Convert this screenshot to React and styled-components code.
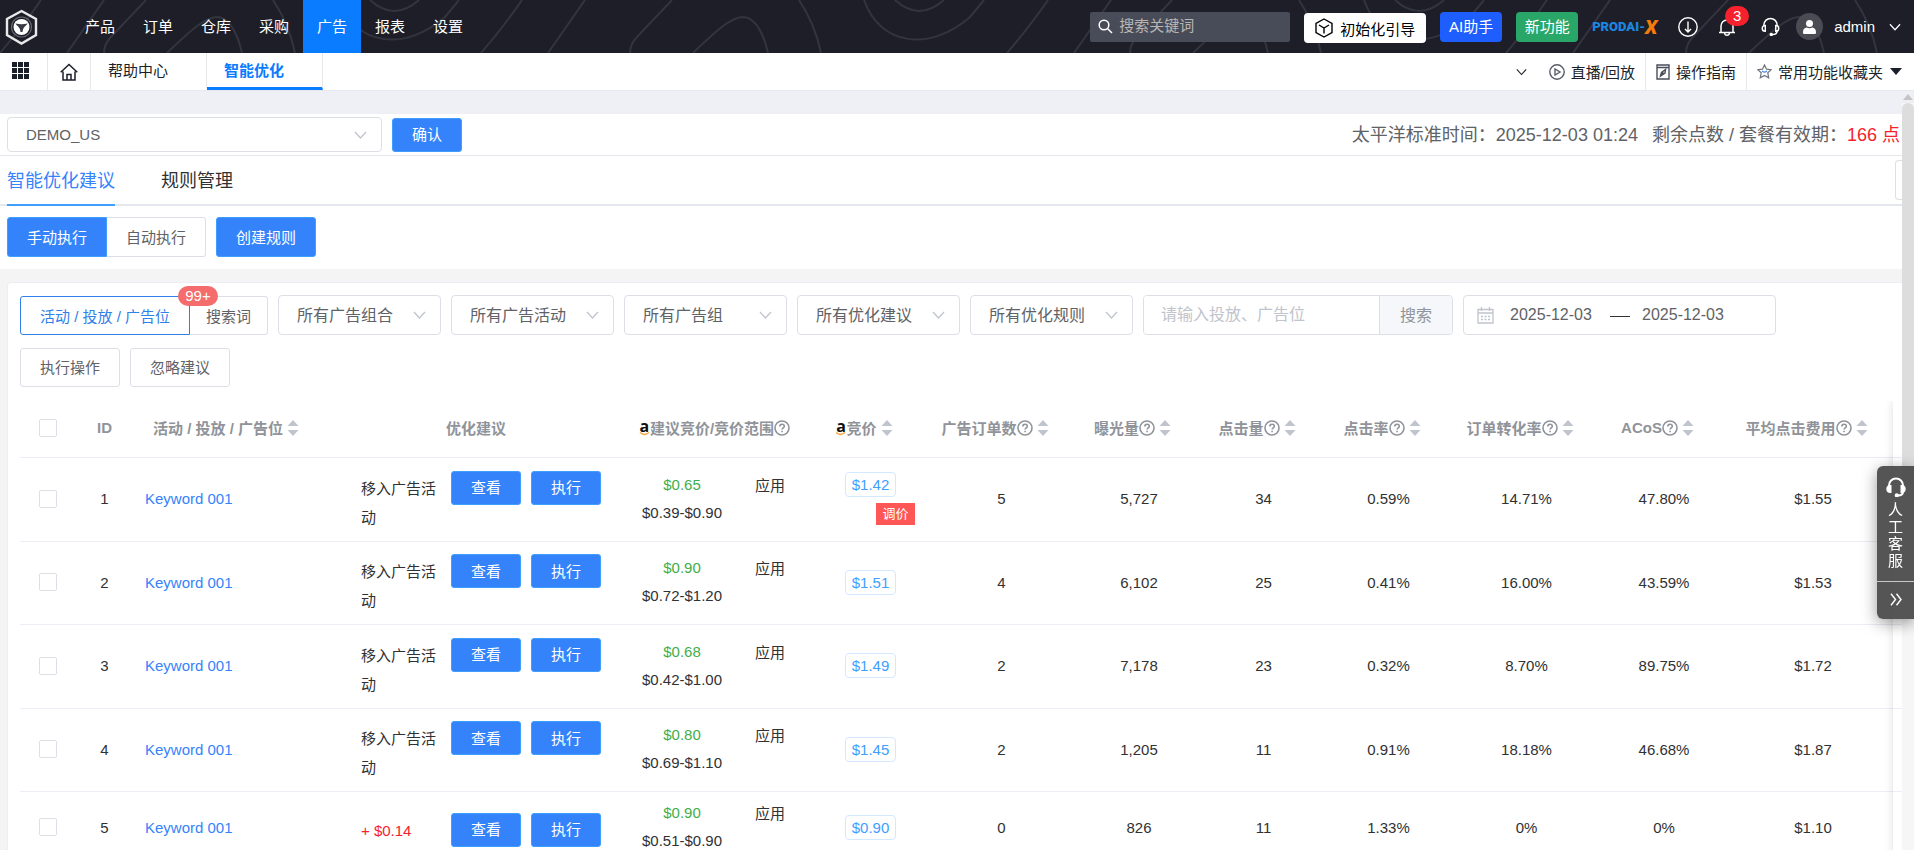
import React, { useState } from 'react';
import styled, { createGlobalStyle, ThemeProvider } from 'styled-components';

const theme = {
  dark: '#1e1e28',
  blue: '#0a7cff',
  primary: '#3583fb',
  text: '#303133',
  grey: '#606266',
  muted: '#909399',
  placeholder: '#c0c4cc',
  border: '#dcdfe6',
  line: '#ebeef5',
  red: '#f5222d',
  font: {
    size: { s: '13px', m: '15px', l: '16px', xl: '18px' },
  },
};

const GlobalStyle = createGlobalStyle`
  *, *::before, *::after {
    box-sizing: border-box;
  }
  body {
    margin: 0;
    overflow: hidden;
    font-family: 'Liberation Sans', 'Noto Sans CJK SC', sans-serif;
    font-size: 15px;
    color: #303133;
    background: #fff;
  }
  button, input, select {
    font-family: inherit;
    font-size: inherit;
    margin: 0;
  }
  button {
    cursor: pointer;
  }
  a {
    text-decoration: none;
  }
  svg {
    display: block;
    flex-shrink: 0;
  }
`;

const Page = styled.div`
  display: flex;
  flex-direction: column;
  height: 100vh;
`;

/* top bar */

const Header = styled.header`
  position: relative;
  display: flex;
  align-items: center;
  flex-shrink: 0;
  height: 53px;
  padding: 0 13px 0 5px;
  color: #fff;
  background-color: ${({ theme }) => theme.dark};
`;

const Waves = styled.svg`
  position: absolute;
  top: 0;
  left: 0;
  width: 100%;
  height: 100%;
  fill: none;
  stroke: #34343e;
  stroke-width: 2;
`;

const LogoLink = styled.a`
  position: relative;
  width: 66px;
`;

const MainNav = styled.nav`
  position: relative;
  display: flex;
  flex: 1;
`;

const NavLink = styled.a`
  padding: 0 14px;
  line-height: 53px;
  color: #fff;
  background-color: ${({ $active, theme }) => ($active ? theme.blue : 'transparent')};
`;

const HeaderTools = styled.div`
  position: relative;
  display: flex;
  align-items: center;
`;

const SearchBox = styled.label`
  display: flex;
  align-items: center;
  gap: 6px;
  width: 200px;
  height: 30px;
  margin-right: 14px;
  padding: 0 8px;
  border-radius: 2px;
  background-color: #484c59;
`;

const SearchInput = styled.input`
  flex: 1;
  min-width: 0;
  padding: 0 0 2px;
  border: 0;
  outline: 0;
  color: #fff;
  background: transparent;
  &::placeholder {
    color: #b8b6b4;
  }
`;

const HeaderButton = styled.button`
  display: flex;
  align-items: center;
  justify-content: center;
  gap: 7px;
  min-width: 62px;
  height: 30px;
  margin-right: 14px;
  padding: 0 7px 2px;
  border: 0;
  border-radius: 4px;
  white-space: nowrap;
  color: ${({ $color }) => $color || '#fff'};
  background-color: ${({ $bg }) => $bg};
`;

const GuideButton = styled(HeaderButton)`
  padding: 0 11px;
  margin-top: 3px;
`;

const Brand = styled.a`
  display: flex;
  align-items: center;
  width: 67px;
  margin-right: 19px;
  font: 900 13px Roboto, sans-serif;
  color: #1b86e0;
`;

const BrandMark = styled.span`
  font-size: 20px;
  font-style: italic;
  color: #f57c0a;
`;

const IconButton = styled.button`
  position: relative;
  display: flex;
  align-items: center;
  gap: 14px;
  margin-right: ${({ $gap }) => $gap || 0}px;
  padding: 0;
  border: 0;
  color: inherit;
  background: none;
`;

const CountBadge = styled.span`
  position: absolute;
  top: -12px;
  left: 7px;
  width: 24px;
  border-radius: 10px;
  line-height: 20px;
  text-align: center;
  color: #fff;
  background-color: ${({ theme }) => theme.red};
`;

const Avatar = styled.span`
  display: flex;
  align-items: center;
  justify-content: center;
  width: 27px;
  height: 27px;
  margin-right: 11px;
  border-radius: 50%;
  background-color: #4b4b54;
`;

/* page tabs */

const TabBar = styled.div`
  display: flex;
  flex-shrink: 0;
  height: 38px;
  border-bottom: 1px solid #e6e8ec;
  color: #1b1f2a;
`;

const TabIcon = styled.a`
  display: flex;
  align-items: center;
  justify-content: center;
  width: 43px;
  border-right: 1px solid #e6e8ec;
  color: inherit;
`;

const MenuIcon = styled(TabIcon)`
  justify-content: flex-start;
  width: 48px;
  padding: 0 0 3px 12px;
`;

const PageTab = styled.a`
  width: 116px;
  padding-left: 17px;
  border-right: 1px solid #e6e8ec;
  border-bottom: 3px solid ${({ $active, theme }) => ($active ? theme.blue : 'transparent')};
  line-height: 36px;
  font-weight: ${({ $active }) => ($active ? 700 : 400)};
  color: ${({ $active, theme }) => ($active ? theme.blue : 'inherit')};
`;

const TabTools = styled.div`
  display: flex;
  margin-left: auto;
  padding-right: 2px;
`;

const ToolLink = styled.a`
  display: flex;
  align-items: center;
  gap: 6px;
  padding: 0 10px;
  border-right: ${({ $last }) => ($last ? 0 : 1)}px solid #e6e8ec;
  white-space: nowrap;
  color: inherit;
`;

/* body */

const Body = styled.div`
  display: flex;
  flex: 1;
  min-height: 0;
  background-color: #f4f4f4;
`;

const Content = styled.main`
  flex: 1;
  min-width: 0;
  overflow: hidden;
`;

const TopBand = styled.div`
  height: 23px;
  background-color: #eff0f5;
`;

const ShopBar = styled.div`
  display: flex;
  align-items: center;
  gap: 10px;
  height: 42px;
  padding: 0 2px 0 7px;
  border-bottom: 1px solid #e4e7ec;
  background-color: #fff;
`;

const SelectBox = styled.div`
  position: relative;
  width: ${({ $width }) => $width}px;
  height: ${({ $height }) => $height}px;
  svg {
    position: absolute;
    top: 50%;
    right: 15px;
    margin-top: -4px;
    pointer-events: none;
  }
`;

const Select = styled.select`
  appearance: none;
  width: 100%;
  height: 100%;
  padding: 0 18px;
  border: 1px solid ${({ theme }) => theme.border};
  border-radius: 4px;
  font-size: ${({ $size, theme }) => theme.font.size[$size || 'l']};
  color: ${({ theme }) => theme.grey};
  background-color: #fff;
`;

const Button = styled.button`
  height: ${({ $height }) => $height || 34}px;
  padding: 0 19px 2px;
  border: 1px solid ${({ $plain, theme }) => ($plain ? theme.border : '#409eff')};
  border-radius: 3px;
  white-space: nowrap;
  color: ${({ $plain, theme }) => ($plain ? theme.grey : '#fff')};
  background-color: ${({ $plain, theme }) => ($plain ? '#fff' : theme.primary)};
`;

const ShopInfo = styled.p`
  display: flex;
  gap: 14px;
  margin: 0 0 0 auto;
  padding-bottom: 3px;
  font-size: ${({ theme }) => theme.font.size.xl};
  white-space: nowrap;
  color: ${({ theme }) => theme.grey};
`;

const Points = styled.span`
  color: ${({ theme }) => theme.red};
`;

const SectionTabs = styled.div`
  display: flex;
  gap: 46px;
  height: 50px;
  padding-left: 7px;
  border-bottom: 2px solid #e4e7ed;
  background-color: #fff;
`;

const SectionTab = styled.a`
  height: 50px;
  line-height: 50px;
  font-size: ${({ theme }) => theme.font.size.xl};
  border-bottom: 2px solid ${({ $active }) => ($active ? '#409eff' : 'transparent')};
  color: ${({ $active, theme }) => ($active ? theme.primary : theme.text)};
`;

const SideButton = styled.button`
  align-self: center;
  width: 7px;
  height: 40px;
  margin-left: auto;
  padding: 0;
  border: 1px solid ${({ theme }) => theme.border};
  border-right: 0;
  border-radius: 4px 0 0 4px;
  background-color: #fff;
`;

const ModeBar = styled.div`
  display: flex;
  gap: 10px;
  margin-bottom: 13px;
  padding: 11px 7px 12px;
  background-color: #fff;
`;

const ButtonGroup = styled.div`
  display: flex;
  button:first-child {
    border-radius: 3px 0 0 3px;
  }
  button:last-child {
    border-left: 0;
    border-radius: 0 3px 3px 0;
  }
`;

const Card = styled.section`
  margin-left: 7px;
  padding: 12px 0 0 12px;
  border: 1px solid ${({ theme }) => theme.line};
  border-right: 0;
  border-radius: 4px 0 0 0;
  background-color: #fff;
`;

const Filters = styled.div`
  display: flex;
  align-items: flex-end;
  gap: 10px;
  margin-bottom: 13px;
`;

const ScopeButton = styled.button`
  position: relative;
  height: 39px;
  padding: 0 ${({ $active }) => ($active ? 19 : 16)}px;
  border: 1px solid ${({ $active, theme }) => ($active ? '#2f80e8' : theme.border)};
  white-space: nowrap;
  color: ${({ $active, theme }) => ($active ? '#2f80e8' : theme.grey)};
  background-color: #fff;
`;

const ScopeBadge = styled.span`
  position: absolute;
  z-index: 1;
  top: -11px;
  right: -29px;
  width: 40px;
  border-radius: 10px;
  line-height: 20px;
  color: #fff;
  background-color: #f56c6c;
`;

const SearchGroup = styled.div`
  display: flex;
  width: 310px;
  height: 40px;
  border: 1px solid ${({ theme }) => theme.border};
  border-radius: 4px;
  font-size: ${({ theme }) => theme.font.size.l};
  overflow: hidden;
`;

const TextInput = styled.input`
  flex: 1;
  min-width: 0;
  padding: 0 17px;
  border: 0;
  outline: 0;
  &::placeholder {
    color: ${({ theme }) => theme.placeholder};
  }
`;

const AppendButton = styled.button`
  width: 73px;
  padding: 0 0 2px;
  border: 0;
  border-left: 1px solid ${({ theme }) => theme.border};
  color: ${({ theme }) => theme.muted};
  background-color: #f5f7fa;
`;

const DateRange = styled.div`
  display: flex;
  align-items: center;
  width: 313px;
  height: 40px;
  padding-left: 13px;
  border: 1px solid ${({ theme }) => theme.border};
  border-radius: 4px;
  font-size: ${({ theme }) => theme.font.size.l};
`;

const DateInput = styled.input`
  width: 84px;
  padding: 0;
  border: 0;
  outline: 0;
  color: ${({ theme }) => theme.grey};
`;

const DateDash = styled.span`
  width: 20px;
  height: 1px;
  margin: 2px 12px 0 16px;
  background-color: ${({ theme }) => theme.text};
`;

const Actions = styled.div`
  display: flex;
  gap: 10px;
  margin-bottom: 14px;
`;

/* table */

const TableWrap = styled.div`
  position: relative;
  overflow: hidden;
`;

const FixedEdge = styled.div`
  position: absolute;
  top: 0;
  right: 0;
  bottom: 0;
  width: 9px;
  box-shadow: 0 0 10px rgba(0, 0, 0, 0.14);
  pointer-events: none;
`;

const Table = styled.table`
  width: 100%;
  table-layout: fixed;
  border-collapse: separate;
  border-spacing: 0;
  tr:nth-child(even) td {
    height: 83px;
  }
  tr:last-child td {
    height: 73px;
  }
`;

const Th = styled.th`
  height: 57px;
  padding: 0 0 3px;
  border-bottom: 1px solid ${({ theme }) => theme.line};
  white-space: nowrap;
  color: ${({ theme }) => theme.muted};
`;

const ThInner = styled.span`
  display: flex;
  align-items: center;
  justify-content: center;
`;

const Td = styled.td`
  height: 84px;
  padding: 0 0 2px;
  border-bottom: 1px solid ${({ theme }) => theme.line};
  text-align: ${({ $align }) => $align || 'center'};
`;

const SortIcon = styled.svg`
  margin: 0 13px 0 4px;
  fill: ${({ theme }) => theme.placeholder};
`;

const AmazonMark = styled.span`
  display: inline-flex;
  flex-direction: column;
  align-items: center;
  width: 11px;
  font: 700 16px/12px 'Open Sans', sans-serif;
  color: #111;
`;

const Checkbox = styled.input`
  appearance: none;
  display: block;
  width: 18px;
  height: 18px;
  margin: 0 auto;
  border: 1px solid ${({ theme }) => theme.border};
  border-radius: 2px;
  background-color: ${({ checked, theme }) => (checked ? theme.primary : '#fff')};
`;

const KeywordLink = styled.a`
  padding-left: 11px;
  color: ${({ theme }) => theme.primary};
`;

const Suggestion = styled.div`
  display: flex;
  align-items: flex-start;
  gap: 10px;
  padding: 5px 0 0 30px;
  line-height: 29px;
`;

const SuggestionText = styled.span`
  width: 80px;
  padding-top: 3px;
  text-align: left;
  color: ${({ $raise, theme }) => ($raise ? theme.red : theme.text)};
`;

const BidCell = styled.div`
  display: flex;
  align-items: flex-start;
  padding-left: 11px;
  line-height: 28px;
`;

const BidRange = styled.span`
  display: flex;
  flex-direction: column;
  width: 100px;
`;

const BidValue = styled.span`
  color: #3fae49;
`;

const ApplyButton = styled.button`
  flex: 1;
  padding: 0;
  border: 0;
  line-height: 29px;
  color: inherit;
  background: none;
`;

const PriceCell = styled.div`
  display: flex;
  flex-direction: column;
  align-items: center;
  gap: 6px;
`;

const PriceTag = styled.button`
  height: 25px;
  padding: 0 6px;
  border: 1px solid #d4e8ff;
  border-radius: 4px;
  color: #409eff;
  background-color: #fff;
`;

const AdjustTag = styled.span`
  margin-left: 50px;
  padding: 0 6px;
  line-height: 22px;
  font-size: ${({ theme }) => theme.font.size.s};
  color: #fff;
  background-color: #ff5656;
`;

/* page edges */

const Scrollbar = styled.div`
  display: flex;
  flex-direction: column;
  align-items: center;
  width: 12px;
  background-color: #f6f6f6;
`;

const ScrollArrow = styled.span`
  width: 100%;
  height: 12px;
  padding: 3px 1px;
  background-color: #eff0f5;
`;

const ScrollThumb = styled.span`
  width: 12px;
  height: 382px;
  border-radius: 6px;
  background-color: #dddddd;
`;

const ServiceDock = styled.aside`
  position: fixed;
  top: 466px;
  right: 0;
  width: 37px;
  border-radius: 6px 0 0 6px;
  color: #fff;
  background-color: rgba(70, 70, 70, 0.92);
  box-shadow: 0 4px 16px rgba(0, 0, 0, 0.4);
`;

const DockButton = styled.button`
  display: flex;
  flex-direction: column;
  align-items: center;
  justify-content: center;
  width: 100%;
  height: ${({ $height }) => $height}px;
  padding: 0 0 2px;
  border: 0;
  border-top: ${({ $line }) => ($line ? '1px solid #c8c8c8' : 0)};
  line-height: 17px;
  color: inherit;
  background: none;
`;

const DockText = styled.span`
  width: 16px;
  margin-top: 4px;
`;

const DownIcon = ({ width = 13, stroke = '#c0c4cc' }) => (
  <svg width={width} height="8" viewBox="0 0 13 8" fill="none" stroke={stroke} strokeWidth="1.3">
    <path d="M1 1l5.500 6L12 1" />
  </svg>
);

const Sort = () => (
  <SortIcon width="12" height="16" viewBox="0 0 12 16">
    <path d="M6 0l5.500 6h-11zM6 16l5.500-6h-11z" />
  </SortIcon>
);

const Help = () => (
  <svg width="16" height="16" viewBox="0 0 16 16" fill="none" stroke="#909399" strokeWidth="1.600">
    <circle cx="8" cy="8" r="7" />
    <path d="M5.800 6.500c0-3 4.500-3 4.500-.3 0 1.700-2.200 1.600-2.200 3.400M8.100 10.700v1.500" />
  </svg>
);

const Amazon = () => (
  <AmazonMark>
    a
    <svg width="11" height="4" viewBox="0 0 11 4" fill="none" stroke="#f9a13a" strokeWidth="1.300">
      <path d="M1 .6c3 2.600 6 2.600 9 0" />
    </svg>
  </AmazonMark>
);

const Headset = ({ size, filled }) => (
  <svg width={size} height={size} viewBox="0 0 20 20" fill="none" stroke="currentColor" strokeWidth={filled ? 2 : 1.5}>
    <path d="M3 9.500V8.500a7 7 0 0 1 14 0v1M17 14.500c0 2.500-2 4-5 4" />
    <path d="M4.500 9C2.500 9 1.300 10 1.300 12s1.200 3 3.200 3zM15.500 9c2 0 3.200 1 3.200 3s-1.200 3-3.200 3z" fill={filled ? 'currentColor' : 'none'} />
    <circle cx="10.800" cy="18.300" r="1.100" fill="currentColor" />
  </svg>
);

const Logo = () => (
  <svg width="33" height="36" viewBox="0 0 33 36" fill="none">
    <path d="M16.500 2L31 10v16l-14.500 8.500L2 26V10z" stroke="#e8e8ea" strokeWidth="2.400" />
    <circle cx="16.500" cy="18" r="10" stroke="#6a6a72" strokeWidth="1.200" />
    <circle cx="16.500" cy="18" r="8" fill="#fff" />
    <path d="M10.500 14.500c4 1 8 1 12 0-1.500 3-4.500 3-5 8.500h-2c-.5-5.500-3.500-5.500-5-8.500z" fill="#3a3a44" />
  </svg>
);

const navItems = ['产品', '订单', '仓库', '采购', '广告', '报表', '设置'];

const filters = ['所有广告组合', '所有广告活动', '所有广告组', '所有优化建议', '所有优化规则'];

const columns = [
  { title: 'ID', width: 59 },
  { title: '活动 / 投放 / 广告位', width: 197, sort: true },
  { title: '优化建议', width: 290 },
  { title: '建议竞价/竞价范围', width: 187, amazon: true, help: true },
  { title: '竞价', width: 125, amazon: true, sort: true },
  { title: '广告订单数', width: 137, help: true, sort: true },
  { title: '曝光量', width: 138, help: true, sort: true },
  { title: '点击量', width: 111, help: true, sort: true },
  { title: '点击率', width: 139, help: true, sort: true },
  { title: '订单转化率', width: 137, help: true, sort: true },
  { title: 'ACoS', width: 138, help: true, sort: true },
  { title: '平均点击费用', help: true, sort: true },
];

const rows = [
  { id: 1, advice: '移入广告活动', bid: '$0.65', range: '$0.39-$0.90', price: '$1.42', adjust: true, stats: ['5', '5,727', '34', '0.59%', '14.71%', '47.80%', '$1.55'] },
  { id: 2, advice: '移入广告活动', bid: '$0.90', range: '$0.72-$1.20', price: '$1.51', stats: ['4', '6,102', '25', '0.41%', '16.00%', '43.59%', '$1.53'] },
  { id: 3, advice: '移入广告活动', bid: '$0.68', range: '$0.42-$1.00', price: '$1.49', stats: ['2', '7,178', '23', '0.32%', '8.70%', '89.75%', '$1.72'] },
  { id: 4, advice: '移入广告活动', bid: '$0.80', range: '$0.69-$1.10', price: '$1.45', stats: ['2', '1,205', '11', '0.91%', '18.18%', '46.68%', '$1.87'] },
  { id: 5, advice: '+ $0.14', raise: true, bid: '$0.90', range: '$0.51-$0.90', price: '$0.90', stats: ['0', '826', '11', '1.33%', '0%', '0%', '$1.10'] },
];

const HeaderWaves = () => (
  <Waves aria-hidden="true">
    {[-481, 0, 526, 1025].map((x) => (
      <path key={x} transform={`translate(${x} 0)`} d="M522 0Q505 25 481 53M585 0L548 53" />
    ))}
    {[-526, 0, 500, 1056].map((x) => (
      <path key={x} transform={`translate(${x} 0)`} d="M672 0L636 38Q630 45 630 53M693 53C715 32 730 17 744 17C756 18 764 35 768 53M799 0Q815 24 821 53" />
    ))}
    {[-525, 0, 500].map((x) => (
      <path key={x} transform={`translate(${x} 0)`} d="M895 0Q919 22 944 0M864 0C880 46 930 52 970 17L984 0" />
    ))}
  </Waves>
);

const TopBar = () => (
  <Header>
    <HeaderWaves />
    <LogoLink href="#home" aria-label="首页">
      <Logo />
    </LogoLink>
    <MainNav>
      {navItems.map((item) => (
        <NavLink key={item} href={`#${item}`} $active={item === '广告'}>
          {item}
        </NavLink>
      ))}
    </MainNav>
    <HeaderTools>
      <SearchBox>
        <svg width="15" height="15" viewBox="0 0 15 15" fill="none" stroke="#fff" strokeWidth="1.500">
          <circle cx="6" cy="6" r="4.800" />
          <path d="M9.500 9.500L14 14" />
        </svg>
        <SearchInput placeholder="搜索关键词" aria-label="搜索关键词" />
      </SearchBox>
      <GuideButton $bg="#fff" $color="#000">
        <svg width="18" height="20" viewBox="0 0 18 20" fill="none" stroke="currentColor" strokeWidth="1.400">
          <path d="M9 1l8 4.500v9L9 19l-8-4.500v-9zM4 7l5 3 5-3M9 10v5.500" />
        </svg>
        初始化引导
      </GuideButton>
      <HeaderButton $bg="#1e5eff">AI助手</HeaderButton>
      <HeaderButton $bg="#29a768">新功能</HeaderButton>
      <Brand href="#prodai">
        PRODAI-<BrandMark>X</BrandMark>
      </Brand>
      <IconButton $gap={20} aria-label="下载">
        <svg width="20" height="20" viewBox="0 0 20 20" fill="none" stroke="currentColor" strokeWidth="1.400">
          <circle cx="10" cy="10" r="9.200" />
          <path d="M10 4.500v10.500M7 12l3 3 3-3" />
        </svg>
      </IconButton>
      <IconButton $gap={25} aria-label="消息">
        <svg width="18" height="18" viewBox="0 0 18 18" fill="none" stroke="currentColor" strokeWidth="1.500">
          <path d="M1 14.500h16M3 14.500V8a6 6 0 0 1 12 0v6.500M6.500 15c.5 3 4.500 3 5 0" />
        </svg>
        <CountBadge>3</CountBadge>
      </IconButton>
      <IconButton $gap={16} aria-label="客服">
        <Headset size={19} />
      </IconButton>
      <Avatar>
        <svg width="13" height="14" viewBox="0 0 13 14" fill="#fff">
          <circle cx="6.500" cy="3.500" r="3.500" />
          <path d="M1 14c-1 0-1-1-1-2 0-3 2-4 3.500-4.500 2 1 4 1 6 0C11 8 13 9 13 12c0 1 0 2-1 2z" />
        </svg>
      </Avatar>
      <IconButton>
        admin
        <DownIcon width={12} stroke="#fff" />
      </IconButton>
    </HeaderTools>
  </Header>
);

const PageTabs = () => (
  <TabBar>
    <MenuIcon href="#menu" aria-label="菜单">
      <svg width="17" height="17" viewBox="0 0 17 17" fill="currentColor">
        {[0, 6, 12].map((y) => [0, 6, 12].map((x) => <rect key={`${x}-${y}`} x={x} y={y} width="5" height="5" />))}
      </svg>
    </MenuIcon>
    <TabIcon href="#home" aria-label="主页">
      <svg width="18" height="18" viewBox="0 0 18 18" fill="none" stroke="currentColor" strokeWidth="1.500">
        <path d="M.7 9.300L9 1.500l8.300 7.800M3 8.500V17h12V8.500M7 17v-5.500h4V17" />
      </svg>
    </TabIcon>
    <PageTab href="#help">帮助中心</PageTab>
    <PageTab href="#smart" $active>
      智能优化
    </PageTab>
    <TabTools>
      <ToolLink href="#live">
        <DownIcon width={11} stroke="#1b1f2a" />
        <svg width="32" height="16" viewBox="0 0 32 16" fill="none" stroke="#5a5e6b" strokeWidth="1.400">
          <circle cx="24" cy="8" r="7.200" />
          <path d="M22 5v6l5-3z" />
        </svg>
        直播/回放
      </ToolLink>
      <ToolLink href="#guide">
        <svg width="14" height="16" viewBox="0 0 14 16" fill="none" stroke="#4a4e5b" strokeWidth="1.400">
          <path d="M1 1h12v14H1zM1 3.500h12M4.500 12l1-3.500 4-3-.5 3.500zM4.500 12l3-3.500" />
        </svg>
        操作指南
      </ToolLink>
      <ToolLink href="#favorites" $last>
        <svg width="15" height="15" viewBox="0 0 16 16" fill="none" stroke="#70747f" strokeWidth="1.300">
          <path d="M8 1l2.200 4.500 5 .6-3.700 3.300 1 5.300L8 12.200l-4.500 2.500 1-5.300L.8 6.100l5-.6z" />
          <path d="M5.500 7.500Q8 10 10.500 7.500" stroke="#3f8cf0" />
        </svg>
        常用功能收藏夹
        <svg width="13" height="7" viewBox="0 0 13 7" fill="#1b1f2a">
          <path d="M1 0h12L7 7z" />
        </svg>
      </ToolLink>
    </TabTools>
  </TabBar>
);

const DataRow = ({ row, checked, onToggle }) => (
  <tr>
    <Td>
      <Checkbox type="checkbox" aria-label={`选择 ${row.id}`} checked={checked} onChange={onToggle} />
    </Td>
    <Td>{row.id}</Td>
    <Td $align="left">
      <KeywordLink href="#keyword">Keyword 001</KeywordLink>
    </Td>
    <Td>
      <Suggestion>
        <SuggestionText $raise={row.raise}>{row.advice}</SuggestionText>
        <Button>查看</Button>
        <Button>执行</Button>
      </Suggestion>
    </Td>
    <Td>
      <BidCell>
        <BidRange>
          <BidValue>{row.bid}</BidValue>
          {row.range}
        </BidRange>
        <ApplyButton>应用</ApplyButton>
      </BidCell>
    </Td>
    <Td>
      <PriceCell>
        <PriceTag>{row.price}</PriceTag>
        {row.adjust && <AdjustTag>调价</AdjustTag>}
      </PriceCell>
    </Td>
    {row.stats.map((value, i) => (
      <Td key={i}>{value}</Td>
    ))}
    <Td aria-hidden="true" />
  </tr>
);

const App = () => {
  const [selected, setSelected] = useState([]);

  const toggle = (id) => setSelected(selected.includes(id) ? selected.filter((item) => item !== id) : [...selected, id]);
  const toggleAll = () => setSelected(selected.length === rows.length ? [] : rows.map((row) => row.id));

  return (
    <ThemeProvider theme={theme}>
      <GlobalStyle />
      <Page>
        <TopBar />
        <PageTabs />
        <Body>
          <Content>
            <TopBand />
            <ShopBar>
              <SelectBox $width={375} $height={35}>
                <Select $size="m" aria-label="店铺">
                  <option>DEMO_US</option>
                </Select>
                <DownIcon />
              </SelectBox>
              <Button>确认</Button>
              <ShopInfo>
                <span>太平洋标准时间：2025-12-03 01:24</span>
                <span>
                  剩余点数 / 套餐有效期：<Points>166 点</Points>
                </span>
              </ShopInfo>
            </ShopBar>
            <SectionTabs>
              <SectionTab href="#advice" $active>
                智能优化建议
              </SectionTab>
              <SectionTab href="#rules">规则管理</SectionTab>
              <SideButton aria-label="更多" />
            </SectionTabs>
            <ModeBar>
              <ButtonGroup>
                <Button $height={40}>手动执行</Button>
                <Button $height={40} $plain>
                  自动执行
                </Button>
              </ButtonGroup>
              <Button $height={40}>创建规则</Button>
            </ModeBar>
            <Card>
              <Filters>
                <ButtonGroup>
                  <ScopeButton $active>
                    活动 / 投放 / 广告位
                    <ScopeBadge>99+</ScopeBadge>
                  </ScopeButton>
                  <ScopeButton>搜索词</ScopeButton>
                </ButtonGroup>
                {filters.map((name) => (
                  <SelectBox key={name} $width={163} $height={40}>
                    <Select aria-label={name}>
                      <option>{name}</option>
                    </Select>
                    <DownIcon />
                  </SelectBox>
                ))}
                <SearchGroup>
                  <TextInput placeholder="请输入投放、广告位" aria-label="投放、广告位" />
                  <AppendButton>搜索</AppendButton>
                </SearchGroup>
                <DateRange>
                  <svg width="33" height="17" viewBox="0 0 33 17" fill="none" stroke="#c0c4cc" strokeWidth="1.300">
                    <path d="M1 2.500h15v13.500H1zM1 6h15M4.500 0v4M12.500 0v4" />
                    <path d="M4 9.500h9M4 12.500h9" strokeDasharray="2 1.500" />
                  </svg>
                  <DateInput defaultValue="2025-12-03" aria-label="开始日期" />
                  <DateDash />
                  <DateInput defaultValue="2025-12-03" aria-label="结束日期" />
                </DateRange>
              </Filters>
              <Actions>
                <Button $height={39} $plain>
                  执行操作
                </Button>
                <Button $height={39} $plain>
                  忽略建议
                </Button>
              </Actions>
              <TableWrap>
                <Table>
                  <colgroup>
                    <col width="55" />
                    {columns.map((col) => (
                      <col key={col.title} width={col.width} />
                    ))}
                    <col width="9" />
                  </colgroup>
                  <thead>
                    <tr>
                      <Th>
                        <Checkbox type="checkbox" aria-label="全选" checked={selected.length === rows.length} onChange={toggleAll} />
                      </Th>
                      {columns.map((col) => (
                        <Th key={col.title}>
                          <ThInner>
                            {col.amazon && <Amazon />}
                            {col.title}
                            {col.help && <Help />}
                            {col.sort && <Sort />}
                          </ThInner>
                        </Th>
                      ))}
                      <Th aria-hidden="true" />
                    </tr>
                  </thead>
                  <tbody>
                    {rows.map((row) => (
                      <DataRow key={row.id} row={row} checked={selected.includes(row.id)} onToggle={() => toggle(row.id)} />
                    ))}
                  </tbody>
                </Table>
                <FixedEdge />
              </TableWrap>
            </Card>
          </Content>
          <Scrollbar>
            <ScrollArrow>
              <svg width="10" height="6" viewBox="0 0 10 6" fill="#c4c4c4">
                <path d="M5 0l5 6H0z" />
              </svg>
            </ScrollArrow>
            <ScrollThumb />
          </Scrollbar>
        </Body>
        <ServiceDock>
          <DockButton $height={115}>
            <Headset size={20} filled />
            <DockText>人工客服</DockText>
          </DockButton>
          <DockButton $height={38} $line aria-label="收起">
            <svg width="12" height="13" viewBox="0 0 12 13" fill="none" stroke="currentColor" strokeWidth="1.400">
              <path d="M1 .8l4.500 5.700L1 12.200M6.500.8L11 6.500l-4.500 5.700" />
            </svg>
          </DockButton>
        </ServiceDock>
      </Page>
    </ThemeProvider>
  );
};

export default App;
